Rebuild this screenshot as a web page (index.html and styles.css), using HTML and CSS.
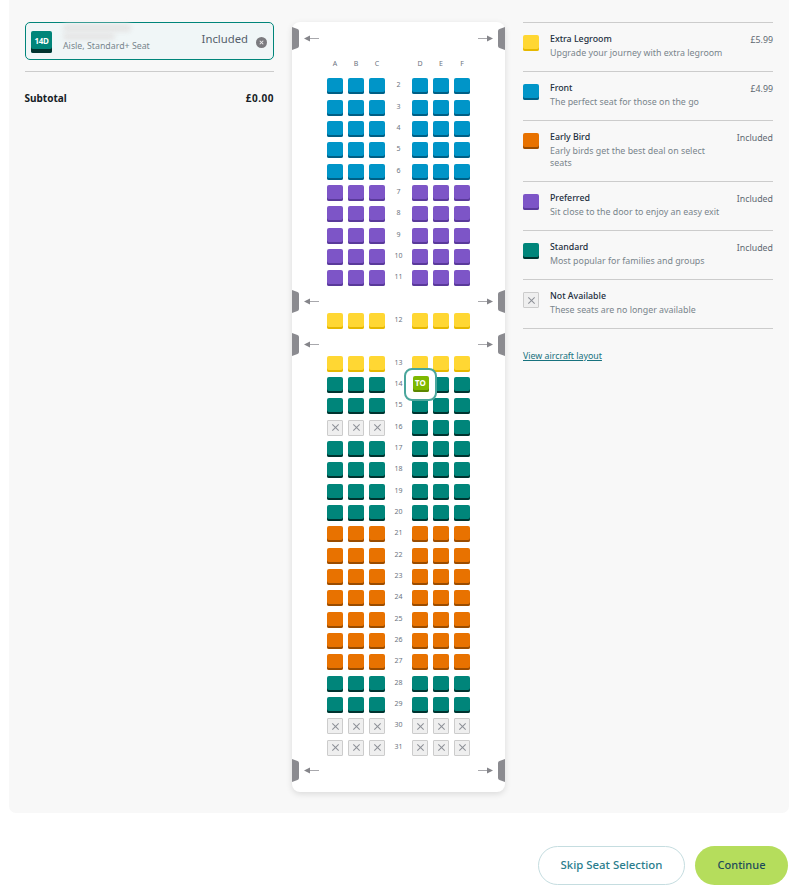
FILE: index.html
```html
<!DOCTYPE html>
<html lang="en">
<head>
<meta charset="utf-8">
<title>Seat selection</title>
<link rel="stylesheet" href="styles.css">
</head>
<body>
<svg class="defs" width="0" height="0" aria-hidden="true">
  <symbol id="door" viewBox="0 0 7 23"><path d="M0 0L5.5 2Q7 2.6 7 4V19Q7 20.400 5.500 21L0 23Z"/></symbol>
  <symbol id="arrow" viewBox="0 0 15 7"><path class="stem" d="M4 3.500H15"/><path class="head" d="M0 3.500L6 .5V6.500Z"/></symbol>
</svg>
<main class="panel">
  <section class="summary">
    <div class="picked">
      <span class="picked-seat">14D</span>
      <div class="picked-info">
        <div class="blur-name"><span class="blur-a"></span><span class="blur-b"></span></div>
        <span class="picked-type">Aisle, Standard+ Seat</span>
      </div>
      <span class="picked-price">Included</span>
      <span class="picked-close"></span>
    </div>
    <div class="subtotal"><span>Subtotal</span><span class="subtotal-value">£0.00</span></div>
  </section>

  <section class="cabin">
    <div class="exit first"><svg class="door"><use href="#door"/></svg><svg class="arrow"><use href="#arrow"/></svg><span class="grow"></span><svg class="arrow flip"><use href="#arrow"/></svg><svg class="door flip"><use href="#door"/></svg></div>
    <div class="letters"><span>A</span><span>B</span><span>C</span><i></i><span>D</span><span>E</span><span>F</span></div>
    <div class="row"><b class="seat blue"></b><b class="seat blue"></b><b class="seat blue"></b><span class="num">2</span><b class="seat blue"></b><b class="seat blue"></b><b class="seat blue"></b></div>
    <div class="row"><b class="seat blue"></b><b class="seat blue"></b><b class="seat blue"></b><span class="num">3</span><b class="seat blue"></b><b class="seat blue"></b><b class="seat blue"></b></div>
    <div class="row"><b class="seat blue"></b><b class="seat blue"></b><b class="seat blue"></b><span class="num">4</span><b class="seat blue"></b><b class="seat blue"></b><b class="seat blue"></b></div>
    <div class="row"><b class="seat blue"></b><b class="seat blue"></b><b class="seat blue"></b><span class="num">5</span><b class="seat blue"></b><b class="seat blue"></b><b class="seat blue"></b></div>
    <div class="row"><b class="seat blue"></b><b class="seat blue"></b><b class="seat blue"></b><span class="num">6</span><b class="seat blue"></b><b class="seat blue"></b><b class="seat blue"></b></div>
    <div class="row"><b class="seat purple"></b><b class="seat purple"></b><b class="seat purple"></b><span class="num">7</span><b class="seat purple"></b><b class="seat purple"></b><b class="seat purple"></b></div>
    <div class="row"><b class="seat purple"></b><b class="seat purple"></b><b class="seat purple"></b><span class="num">8</span><b class="seat purple"></b><b class="seat purple"></b><b class="seat purple"></b></div>
    <div class="row"><b class="seat purple"></b><b class="seat purple"></b><b class="seat purple"></b><span class="num">9</span><b class="seat purple"></b><b class="seat purple"></b><b class="seat purple"></b></div>
    <div class="row"><b class="seat purple"></b><b class="seat purple"></b><b class="seat purple"></b><span class="num">10</span><b class="seat purple"></b><b class="seat purple"></b><b class="seat purple"></b></div>
    <div class="row"><b class="seat purple"></b><b class="seat purple"></b><b class="seat purple"></b><span class="num">11</span><b class="seat purple"></b><b class="seat purple"></b><b class="seat purple"></b></div>
    <div class="exit"><svg class="door"><use href="#door"/></svg><svg class="arrow"><use href="#arrow"/></svg><span class="grow"></span><svg class="arrow flip"><use href="#arrow"/></svg><svg class="door flip"><use href="#door"/></svg></div>
    <div class="row"><b class="seat yellow"></b><b class="seat yellow"></b><b class="seat yellow"></b><span class="num">12</span><b class="seat yellow"></b><b class="seat yellow"></b><b class="seat yellow"></b></div>
    <div class="exit pale"><svg class="door"><use href="#door"/></svg><svg class="arrow"><use href="#arrow"/></svg><span class="grow"></span><svg class="arrow flip"><use href="#arrow"/></svg><svg class="door flip"><use href="#door"/></svg></div>
    <div class="row"><b class="seat yellow"></b><b class="seat yellow"></b><b class="seat yellow"></b><span class="num">13</span><b class="seat yellow"></b><b class="seat yellow"></b><b class="seat yellow"></b></div>
    <div class="row"><b class="seat green"></b><b class="seat green"></b><b class="seat green"></b><span class="num">14</span><b class="seat green holder"><span class="ring"><span class="to">TO</span></span></b><b class="seat green"></b><b class="seat green"></b></div>
    <div class="row"><b class="seat green"></b><b class="seat green"></b><b class="seat green"></b><span class="num">15</span><b class="seat green"></b><b class="seat green"></b><b class="seat green"></b></div>
    <div class="row"><b class="seat none"></b><b class="seat none"></b><b class="seat none"></b><span class="num">16</span><b class="seat green"></b><b class="seat green"></b><b class="seat green"></b></div>
    <div class="row"><b class="seat green"></b><b class="seat green"></b><b class="seat green"></b><span class="num">17</span><b class="seat green"></b><b class="seat green"></b><b class="seat green"></b></div>
    <div class="row"><b class="seat green"></b><b class="seat green"></b><b class="seat green"></b><span class="num">18</span><b class="seat green"></b><b class="seat green"></b><b class="seat green"></b></div>
    <div class="row"><b class="seat green"></b><b class="seat green"></b><b class="seat green"></b><span class="num">19</span><b class="seat green"></b><b class="seat green"></b><b class="seat green"></b></div>
    <div class="row"><b class="seat green"></b><b class="seat green"></b><b class="seat green"></b><span class="num">20</span><b class="seat green"></b><b class="seat green"></b><b class="seat green"></b></div>
    <div class="row"><b class="seat orange"></b><b class="seat orange"></b><b class="seat orange"></b><span class="num">21</span><b class="seat orange"></b><b class="seat orange"></b><b class="seat orange"></b></div>
    <div class="row"><b class="seat orange"></b><b class="seat orange"></b><b class="seat orange"></b><span class="num">22</span><b class="seat orange"></b><b class="seat orange"></b><b class="seat orange"></b></div>
    <div class="row"><b class="seat orange"></b><b class="seat orange"></b><b class="seat orange"></b><span class="num">23</span><b class="seat orange"></b><b class="seat orange"></b><b class="seat orange"></b></div>
    <div class="row"><b class="seat orange"></b><b class="seat orange"></b><b class="seat orange"></b><span class="num">24</span><b class="seat orange"></b><b class="seat orange"></b><b class="seat orange"></b></div>
    <div class="row"><b class="seat orange"></b><b class="seat orange"></b><b class="seat orange"></b><span class="num">25</span><b class="seat orange"></b><b class="seat orange"></b><b class="seat orange"></b></div>
    <div class="row"><b class="seat orange"></b><b class="seat orange"></b><b class="seat orange"></b><span class="num">26</span><b class="seat orange"></b><b class="seat orange"></b><b class="seat orange"></b></div>
    <div class="row"><b class="seat orange"></b><b class="seat orange"></b><b class="seat orange"></b><span class="num">27</span><b class="seat orange"></b><b class="seat orange"></b><b class="seat orange"></b></div>
    <div class="row"><b class="seat green"></b><b class="seat green"></b><b class="seat green"></b><span class="num">28</span><b class="seat green"></b><b class="seat green"></b><b class="seat green"></b></div>
    <div class="row"><b class="seat green"></b><b class="seat green"></b><b class="seat green"></b><span class="num">29</span><b class="seat green"></b><b class="seat green"></b><b class="seat green"></b></div>
    <div class="row"><b class="seat none"></b><b class="seat none"></b><b class="seat none"></b><span class="num">30</span><b class="seat none"></b><b class="seat none"></b><b class="seat none"></b></div>
    <div class="row"><b class="seat none"></b><b class="seat none"></b><b class="seat none"></b><span class="num">31</span><b class="seat none"></b><b class="seat none"></b><b class="seat none"></b></div>
    <div class="exit last"><svg class="door"><use href="#door"/></svg><svg class="arrow"><use href="#arrow"/></svg><span class="grow"></span><svg class="arrow flip"><use href="#arrow"/></svg><svg class="door flip"><use href="#door"/></svg></div>
  </section>

  <section class="legend">
    <ul class="legend-list">
      <li class="legend-item"><b class="seat yellow"></b><div class="legend-text"><h3>Extra Legroom</h3><p>Upgrade your journey with extra legroom</p></div><span class="legend-price">£5.99</span></li>
      <li class="legend-item"><b class="seat blue"></b><div class="legend-text"><h3>Front</h3><p>The perfect seat for those on the go</p></div><span class="legend-price">£4.99</span></li>
      <li class="legend-item tall"><b class="seat orange"></b><div class="legend-text narrow"><h3>Early Bird</h3><p>Early birds get the best deal on select seats</p></div><span class="legend-price">Included</span></li>
      <li class="legend-item"><b class="seat purple"></b><div class="legend-text"><h3>Preferred</h3><p>Sit close to the door to enjoy an easy exit</p></div><span class="legend-price">Included</span></li>
      <li class="legend-item"><b class="seat green"></b><div class="legend-text"><h3>Standard</h3><p>Most popular for families and groups</p></div><span class="legend-price">Included</span></li>
      <li class="legend-item"><b class="seat none"></b><div class="legend-text"><h3>Not Available</h3><p>These seats are no longer available</p></div></li>
    </ul>
    <a class="layout-link" href="#">View aircraft layout</a>
  </section>
</main>
<footer class="actions">
  <button class="btn skip" type="button">Skip Seat Selection</button>
  <button class="btn continue" type="button">Continue</button>
</footer>
</body>
</html>
```
FILE: styles.css
```css
* { box-sizing: border-box; }
html, body { margin: 0; padding: 0; background: #fff; }
body { font-family: "Noto Sans", "Open Sans", sans-serif; color: #232f3e; width: 804px; height: 888px; overflow: hidden; }
.defs { position: absolute; }

.panel {
  display: flex; align-items: flex-start;
  width: 780px; height: 813px; margin-left: 9px;
  padding-top: 22px;
  background: #f8f8f8; border-radius: 0 0 7px 7px;
}

/* Summary */
.summary { width: 249px; margin-left: 16px; }
.picked {
  display: flex; align-items: center; height: 38px; padding-left: 5px;
  background: #f0f6f7; border: 1px solid #00857a; border-radius: 5px;
}
.picked-seat {
  width: 21px; height: 22px; margin-top: 1px; flex: none;
  background: #00857a; border-radius: 2px; box-shadow: inset 0 -4px 0 #00332f;
  color: #fff; font-size: 8px; font-weight: 700; letter-spacing: -.4px; line-height: 20px; text-align: center;
}
.picked-info { flex: 1; margin-left: 11px; position: relative; height: 36px; }
.blur-name { position: absolute; left: 0; top: 1px; }
.blur-a, .blur-b { display: block; background: #e6e6e6; border-radius: 5px; filter: blur(2px); }
.blur-a { width: 68px; height: 8px; }
.blur-b { width: 52px; height: 7px; margin-top: 1px; }
.picked-type { position: absolute; left: 0; top: 17px; font-size: 8.800px; line-height: 13px; color: #78858c; white-space: nowrap; }
.picked-price { font-size: 11.300px; line-height: 16px; color: #555f6b; margin-top: -4px; margin-right: 8px; }
.picked-close {
  position: relative; width: 11px; height: 11px; border-radius: 50%; background: #7b7b7f; margin-right: 6px; margin-top: 3px; flex: none;
}
.picked-close::before, .picked-close::after {
  content: ""; position: absolute; left: 3px; top: 5px; width: 5px; height: 1px; background: #eee;
}
.picked-close::before { transform: rotate(45deg); }
.picked-close::after { transform: rotate(-45deg); }
.subtotal {
  display: flex; justify-content: space-between;
  margin-top: 11px; margin-left: -.5px; padding-top: 19px; border-top: 1px solid #ccc;
  font-size: 10px; line-height: 14px; font-weight: 700; color: #161d26;
}
.subtotal-value { letter-spacing: .5px; }

/* Cabin */
.cabin {
  width: 213px; margin-left: 18px; padding-bottom: 10px; padding-top: 5px;
  background: #fff; border-radius: 8px; box-shadow: 0 2px 6px rgba(0,0,0,.12);
}
.exit { display: flex; align-items: center; height: 23px; margin-top: -1.670px; }
.exit.first { margin-top: 0; }
.exit.last { margin-top: -2px; }
.door { width: 7px; height: 23px; fill: #8b8b90; flex: none; }
.arrow { width: 15px; height: 7px; margin-left: 5px; flex: none; }
.stem { stroke: #a8a8ac; stroke-width: 1; fill: none; }
.head { fill: #85858a; }
.exit.pale .stem { stroke: #dcdcdc; }
.grow { flex: 1; }
.flip { transform: scaleX(-1); }
.arrow.flip { margin-left: 0; margin-right: 5px; }

.letters {
  display: flex; gap: 5px; height: 28.330px; padding-left: 35px; padding-top: 9px;
  font-size: 7px; line-height: 10px; color: #6b7480;
}
.letters span { width: 16px; text-align: center; }
.letters i { width: 17px; }
.row { display: flex; gap: 5px; height: 21.333px; padding-left: 35px; align-items: flex-start; }
.num { width: 17px; height: 14px; font-size: 7px; line-height: 13px; text-align: center; color: #6b7480; }

.seat { display: block; width: 16px; height: 16px; flex: none; border-radius: 2px; position: relative; }
.blue { background: #0095c8; box-shadow: inset 0 -2px 0 #005f85; }
.purple { background: #7d55c7; box-shadow: inset 0 -2px 0 #5a3a9a; }
.yellow { background: #ffd733; box-shadow: inset 0 -2px 0 #e6b800; }
.orange { background: #e87200; box-shadow: inset 0 -2px 0 #9a4c00; }
.green { background: #00857a; box-shadow: inset 0 -2px 0 #00332f; }
.none { background: #efefef; border: 1px solid #ccc; border-radius: 1px; }
.none::before, .none::after {
  content: ""; position: absolute; left: 2.500px; top: 6.500px; width: 9px; height: 1px; background: #8c8f96;
}
.none::before { transform: rotate(45deg); }
.none::after { transform: rotate(-45deg); }

.ring {
  position: absolute; left: -8px; top: -9px; z-index: 2; width: 33px; height: 33px;
  display: flex; justify-content: center; align-items: center;
  background: #fff; border: 2px solid #4aa69c; border-radius: 8px;
}
.to {
  width: 16px; height: 16px; background: #7fb800; border-radius: 2px; box-shadow: inset 0 -2px 0 #5c8500;
  color: #fff; font-size: 8px; font-weight: 700; line-height: 14px; text-align: center;
  margin-top: -1px;
}

/* Legend */
.legend { width: 250px; margin-left: 18px; }
.legend-list { list-style: none; margin: 0; padding: 0; border-top: 1px solid #ccc; }
.legend-item { display: flex; height: 49px; padding-top: 11px; border-bottom: 1px solid #ccc; }
.legend-item.tall { height: 61px; }
.legend-item .seat { margin-top: 1px; }
.legend-text { width: 190px; margin-left: 11px; }
.legend-text.narrow { width: 165px; }
.legend-text h3 { margin: 0; font-size: 8.800px; line-height: 11px; font-weight: 500; color: #232f3e; }
.legend-text p { margin: 2px 0 0; font-size: 8.850px; line-height: 12px; color: #78858c; }
.legend-price { margin-left: auto; font-size: 8.800px; line-height: 12px; color: #5f6872; }
.layout-link { display: inline-block; margin-top: 21px; font-size: 8.800px; line-height: 12px; color: #17727e; text-decoration: underline; }

/* Footer */
.actions { display: flex; justify-content: flex-end; gap: 10px; margin-top: 33px; padding-right: 16px; }
.btn { height: 39px; border-radius: 20px; font-family: inherit; font-weight: 500; padding: 0 0 2px; }
.skip { width: 147px; background: #fff; border: 1px solid #c5dde0; color: #2a7d8c; font-size: 11.400px; }
.continue { width: 93px; background: #b5dd5c; border: 0; color: #1c4b5a; font-size: 11px; }
```
